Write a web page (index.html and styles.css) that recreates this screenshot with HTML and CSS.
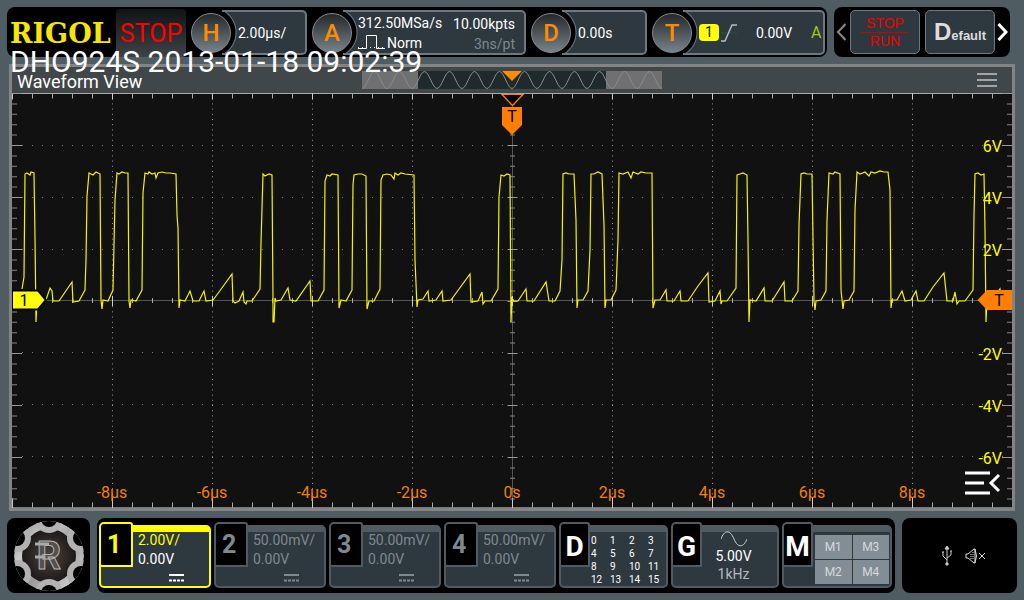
FILE: index.html
```html
<!DOCTYPE html>
<html lang="en">
<head>
    <meta charset="UTF-8">
    <meta name="viewport" content="width=device-width, initial-scale=1.0">
    <title>DHO924S</title>
    <link rel="stylesheet" href="styles.css">
</head>
<body>
    <header class="topbar">
        <div class="panel settings">
            <div class="brand">RIGOL</div>
            <div class="run-state">STOP</div>
            <button class="setting horizontal">
                <span class="knob">H</span>
                <span class="readout">2.00µs/</span>
            </button>
            <button class="setting acquire">
                <span class="knob">A</span>
                <span class="readout">
                    <span class="col">
                        <span>312.50MSa/s</span>
                        <span class="mode">
                            <svg width="27" height="16" viewBox="0 0 27 16"><path d="M0 13.500h8.500V.500h10v13H27" fill="none" stroke="#fff"/><path d="M0 12.500h27" stroke="#fff" stroke-dasharray="1 3"/></svg>
                            Norm
                        </span>
                    </span>
                    <span class="col right">
                        <span>10.00kpts</span>
                        <span class="dim">3ns/pt</span>
                    </span>
                </span>
            </button>
            <button class="setting delay">
                <span class="knob">D</span>
                <span class="readout">0.00s</span>
            </button>
            <button class="setting trigger">
                <span class="knob">T</span>
                <span class="readout">
                    <span class="source">1</span>
                    <svg width="16" height="18" viewBox="0 0 16 18"><path d="M0 9h16" stroke="#23504f"/><path d="M0 17h4L11 1h5" fill="none" stroke="#b4bcc0" stroke-width="1.500"/></svg>
                    <span class="level">0.00V</span>
                    <span class="sweep">A</span>
                </span>
            </button>
        </div>
        <div class="panel shortcuts">
            <button class="arrow prev" aria-label="Previous"><svg width="11" height="18" viewBox="0 0 11 18"><path d="M9.500 1L2 9l7.500 8"/></svg></button>
            <button class="key stoprun"><span>STOP</span><span>RUN</span></button>
            <button class="key default"><span class="big">D</span>efault</button>
            <button class="arrow next" aria-label="Next"><svg width="11" height="18" viewBox="0 0 11 18"><path d="M1.500 1L9 9l-7.500 8"/></svg></button>
        </div>
    </header>
    <div class="stamp">DHO924S 2013-01-18 09:02:39</div>

    <main class="wave-window">
        <div class="wave-head">
            <div class="wave-title">Waveform View</div>
            <svg class="overview" width="300" height="18" viewBox="0 0 300 18">
                <defs>
                    <pattern id="sine" width="25" height="18" patternUnits="userSpaceOnUse">
                        <path d="M0 17.500c4.500 0 8-17 12.500-17s8 17 12.500 17" fill="none" stroke="#858b8b"/>
                    </pattern>
                </defs>
                <rect width="300" height="18" fill="#707070"/>
                <rect x="56" width="188" height="18" fill="#1e2a2c"/>
                <rect width="300" height="18" fill="url(#sine)"/>
                <path d="M140 0h20l-10 10z" fill="#ff8c00"/>
            </svg>
            <button class="menu" aria-label="Menu"><svg width="20" height="14" viewBox="0 0 20 14"><path d="M0 1h20M0 7h20M0 13h20" stroke="#c4c4c4" stroke-width="1.500"/></svg></button>
        </div>
        <svg class="plot" viewBox="12 93 1000 415">
            <rect x="12" y="93" width="1000" height="415" fill="#111"/>

            <!-- grid dots -->
            <g stroke="#777" stroke-dasharray="1 9">
                <path d="M22 145.500H1012M22 197.500H1012M22 249.500H1012M22 352.500H1012M22 404.500H1012M22 456.500H1012"/>
            </g>
            <g stroke="#999" stroke-dasharray="1 4.200">
                <path d="M112.500 93V508M212.500 93V508M312.500 93V508M412.500 93V508M612.500 93V508M712.500 93V508M812.500 93V508M912.500 93V508"/>
            </g>

            <!-- axes and ticks -->
            <path d="M12 300.500H1012M512.500 93V508" stroke="#555"/>
            <path d="M12 93.500H1012" stroke="#aaa"/>
            <path d="M12 507.500H1012" stroke="#777"/>
            <g stroke="#aaa" stroke-dasharray="1 19">
                <path d="M12 96H1012M12 505H1012M12 300.500H1012" stroke-width="5"/>
            </g>
            <g stroke="#ccc" stroke-dasharray="1 99">
                <path d="M12 96H1012" stroke-width="7"/>
                <path d="M12 503H1012M12 301H1012" stroke-width="10"/>
            </g>
            <g stroke="#888" stroke-dasharray="1 9.400">
                <path d="M14.500 93V508M1009.500 93V508M512.500 93V508" stroke-width="5"/>
            </g>
            <g stroke="#999" stroke-dasharray="1 51">
                <path d="M17 93V508M1007 93V508M512.500 93V508" stroke-width="10"/>
            </g>

            <g class="volt">
                <text x="1002" y="152">6V</text>
                <text x="1002" y="204">4V</text>
                <text x="1002" y="256">2V</text>
                <text x="1002" y="360">-2V</text>
                <text x="1002" y="412">-4V</text>
                <text x="1002" y="464">-6V</text>
            </g>
            <g class="time">
                <text x="112" y="498">-8µs</text>
                <text x="212" y="498">-6µs</text>
                <text x="312" y="498">-4µs</text>
                <text x="412" y="498">-2µs</text>
                <text x="512" y="498">0s</text>
                <text x="612" y="498">2µs</text>
                <text x="712" y="498">4µs</text>
                <text x="812" y="498">6µs</text>
                <text x="912" y="498">8µs</text>
            </g>

            <!-- channel 1 trace -->
            <path class="trace" d="M22 289L24 277L25 174L27 173L30 175L31 172L34 173L35 238L36 322L37 300L46 300L50 288L52 291L53 301L59 301L72 282L73 302L79 301L85 290L86 260L87 196L89 173L91 174L93 175L96 172L100 174L101 300L102 309L103 300L108 301L113 290L115 200L117 173L119 174L122 172L125 173L128 173L129 301L130 308L131 300L136 301L142 290L143 193L145 173L148 174L149 172L152 174L155 173L156 178L158 173L162 172L166 173L170 173L176 174L177 215L178 228L179 308L180 300L185 301L190 291L193 301L199 301L204 291L206 301L213 300L219 292L232 274L233 301L235 303L239 301L243 292L244 302L246 304L247 301L252 301L260 289L261 243L263 174L265 176L269 174L272 175L273 301V322H274L275 298L276 301L281 300L288 288L290 300L296 301L310 281L311 301L318 301L324 290L325 181L327 175L330 176L332 174L338 175L339 308L341 300L346 301L352 290L353 185L354 175L358 174L362 174L366 176L367 309L369 301L374 301L380 289L381 180L383 175L387 174L391 175L394 179L395 173L398 175L401 173L405 174L414 175L415 260L417 307L418 300L423 299L428 291L429 301L436 300L442 291L443 301L451 300L470 274L471 302L478 301L482 292L483 304L485 301L491 301L498 289L499 197L501 175L504 176L507 174L510 175L511 322L512 298L514 301L518 301L526 289L527 301L534 301L546 282L549 301L555 301L560 291L562 260L563 174L566 173L569 174L574 174L576 220L577 308L578 300L583 300L588 291L590 250L591 174L594 174L598 172L602 174L604 225L605 308L606 300L611 300L616 290L618 240L619 173L623 174L628 172L631 178L633 172L638 174L641 172L646 173L652 173L653 308L655 300L660 300L666 290L667 301L674 301L680 291L681 301L688 301L698 286L708 273L709 302L715 301L720 291L721 304L722 301L727 301L736 288L737 175L740 174L743 173L747 175L748 240L749 322L750 300L756 301L764 288L765 301L772 301L784 282L785 301L792 301L798 291L799 225L801 174L804 173L807 174L812 174L814 301L815 310L816 301L821 300L826 291L827 220L829 173L833 174L835 172L840 174L841 290L843 309L844 301L849 300L854 291L855 210L857 172L860 174L865 172L869 176L871 172L875 173L880 171L884 172L888 172L890 190L891 308L892 300L897 300L902 291L905 301L911 300L916 291L918 301L924 301L933 287L944 273L947 301L953 301L955 292L957 304L959 301L965 301L973 290L974 215L975 174L978 173L981 175L984 174L985 230L986 322L987 300L992 300L1000 289L1001 301"/>

            <!-- markers -->
            <path d="M12 290.500H38L46 300L38 309.500H12z" fill="#ff0" stroke="#000" stroke-width="2"/>
            <text class="tag" x="24" y="306">1</text>
            <path d="M977.500 300L987 290H1012V310H987z" fill="#ff8000"/>
            <text class="tag" x="999" y="306">T</text>
            <path d="M502 94.500H523L512.500 105.500z" fill="#000" stroke="#ff8c00" stroke-width="1.200"/>
            <path d="M502 107H522V125L512 135L502 125z" fill="#ff8000"/>
            <text class="tag" x="512" y="122">T</text>

            <path d="M965 473H990M965 483H984M965 493H990M999 475L991 483L999 491" fill="none" stroke="#fff" stroke-width="3"/>
        </svg>
    </main>

    <footer class="bottombar">
        <button class="panel gear" aria-label="Start">
            <svg width="72" height="72" viewBox="-36 -36 72 72">
                <defs>
                    <linearGradient id="silver" x1="0" y1="0" x2="1" y2="1">
                        <stop offset="0" stop-color="#8c8c8c"/>
                        <stop offset=".3" stop-color="#c9c9c9"/>
                        <stop offset=".55" stop-color="#9a9a9a"/>
                        <stop offset="1" stop-color="#e0e0e0"/>
                    </linearGradient>
                    <radialGradient id="core">
                        <stop offset="0" stop-color="#4b4340"/>
                        <stop offset="1" stop-color="#1d1918"/>
                    </radialGradient>
                    <clipPath id="disc"><circle r="35"/></clipPath>
                </defs>
                <g clip-path="url(#disc)">
                    <circle r="35" fill="url(#silver)"/>
                    <circle r="27" fill="url(#core)"/>
                    <g fill="#b2b2b2">
                        <circle cx="0" cy="-37" r="14"/><circle cx="32" cy="-18" r="14"/><circle cx="32" cy="18" r="14"/>
                        <circle cx="0" cy="37" r="14"/><circle cx="-32" cy="18" r="14"/><circle cx="-32" cy="-18" r="14"/>
                    </g>
                    <g fill="#000">
                        <circle cx="0" cy="-37" r="8"/><circle cx="32" cy="-18" r="8"/><circle cx="32" cy="18" r="8"/>
                        <circle cx="0" cy="37" r="8"/><circle cx="-32" cy="18" r="8"/><circle cx="-32" cy="-18" r="8"/>
                    </g>
                </g>
                <text class="gear-letter" x="0" y="13">R</text>
                <path d="M-14-12H0M-14 1H-4" stroke="#aaa" stroke-width="3"/>
            </svg>
        </button>
        <div class="panel channels">
            <button class="channel active">
                <span class="tab">1</span>
                <span class="values"><span class="scale">2.00V/</span><span>0.00V</span>
                    <svg class="coupling" width="15" height="8" viewBox="0 0 15 8"><path d="M0 1h15" stroke-width="2"/><path d="M0 6.500h15" stroke-width="2" stroke-dasharray="3 1"/></svg>
                </span>
            </button>
            <button class="channel">
                <span class="tab">2</span>
                <span class="values"><span>50.00mV/</span><span>0.00V</span>
                    <svg class="coupling" width="15" height="8" viewBox="0 0 15 8"><path d="M0 1h15" stroke-width="2"/><path d="M0 6.500h15" stroke-width="2" stroke-dasharray="3 1"/></svg>
                </span>
            </button>
            <button class="channel">
                <span class="tab">3</span>
                <span class="values"><span>50.00mV/</span><span>0.00V</span>
                    <svg class="coupling" width="15" height="8" viewBox="0 0 15 8"><path d="M0 1h15" stroke-width="2"/><path d="M0 6.500h15" stroke-width="2" stroke-dasharray="3 1"/></svg>
                </span>
            </button>
            <button class="channel">
                <span class="tab">4</span>
                <span class="values"><span>50.00mV/</span><span>0.00V</span>
                    <svg class="coupling" width="15" height="8" viewBox="0 0 15 8"><path d="M0 1h15" stroke-width="2"/><path d="M0 6.500h15" stroke-width="2" stroke-dasharray="3 1"/></svg>
                </span>
            </button>
            <button class="channel tool">
                <span class="tab narrow">D</span>
                <span class="digital">
                    <span>0</span><span>1</span><span>2</span><span>3</span>
                    <span>4</span><span>5</span><span>6</span><span>7</span>
                    <span>8</span><span>9</span><span>10</span><span>11</span>
                    <span>12</span><span>13</span><span>14</span><span>15</span>
                </span>
            </button>
            <button class="channel tool">
                <span class="tab narrow">G</span>
                <span class="generator">
                    <svg width="26" height="16" viewBox="0 0 26 16"><path d="M0 8C3-1 9-2 13 8s10 8 13 0" fill="none" stroke="#ccd0d2"/></svg>
                    <span>5.00V</span>
                    <span class="freq">1kHz</span>
                </span>
            </button>
            <button class="channel tool">
                <span class="tab narrow">M</span>
                <span class="math"><span>M1</span><span>M3</span><span>M2</span><span>M4</span></span>
            </button>
        </div>
        <div class="panel status">
            <svg width="10" height="20" viewBox="0 0 10 20" fill="none" stroke="#ccc"><path d="M5 2v15M1 6v4l4 4M9 5v4l-4 3"/><path d="M5 0l2 3H3zM4 17h2v2H4zM0 6h2M8 5h2" fill="#ccc"/></svg>
            <svg width="20" height="18" viewBox="0 0 20 18" fill="none" stroke="#ddd"><path d="M1 7v4h2l6 5h1V2H9L3 7z"/><path d="M10 2q3 7 0 14M14 6l6 6M20 6l-6 6"/><path d="M8 5v8M6 7v5" stroke-dasharray="1 1"/></svg>
        </div>
    </footer>
</body>
</html>
```
FILE: styles.css
```css
*{
    box-sizing: border-box;
}
body{
    margin: 0;
    background-color: #4f5c61;
    color: #fff;
    font-family: Roboto, "Liberation Sans", sans-serif;
    font-size: 14px;
}
button{
    margin: 0;
    padding: 0;
    border: 0;
    background: none;
    color: inherit;
    font: inherit;
    text-align: left;
    cursor: pointer;
}
svg{
    display: block;
    flex: none;
}
.panel{
    background-color: #000;
    border-radius: 8px;
}

/* top bar */
.topbar{
    display: flex;
    gap: 7px;
    height: 64px;
    padding: 7px 14px 7px 7px;
}
.settings{
    flex: 1;
    display: flex;
    gap: 5px;
    padding: 3px 2px 2px 3px;
}
.brand{
    width: 101px;
    color: #f5e800;
    font-family: "DejaVu Serif", serif;
    font-weight: bold;
    font-size: 27px;
    line-height: 48px;
}
.run-state{
    width: 70px;
    margin: -1px 0 -2px;
    border-radius: 4px;
    background: linear-gradient(#111416, #3c4346);
    color: #f00;
    font-size: 25px;
    line-height: 49px;
    text-align: center;
}
.setting{
    display: flex;
    align-items: center;
    height: 45px;
}
.horizontal, .delay{
    flex: 116;
}
.acquire{
    flex: 214;
}
.trigger{
    flex: 173;
}
.knob{
    flex: none;
    width: 40px;
    height: 40px;
    margin-right: -9px;
    border: 1px solid #83898c;
    border-radius: 50%;
    background: linear-gradient(#24282a, #77828a);
    color: #ff8c00;
    font-size: 24px;
    font-weight: 500;
    line-height: 39px;
    text-align: center;
    position: relative;
}
.readout{
    flex: 1;
    display: flex;
    align-items: center;
    height: 45px;
    padding-left: 16px;
    border: 2px solid #6c7981;
    border-left: 0;
    border-radius: 0 5px 5px 0;
    background: radial-gradient(circle at -11px 50%, #000 24px, #6c7981 25px, #2e383f 26px);
    white-space: nowrap;
}
.acquire .readout{
    justify-content: space-between;
    padding: 0 9px 0 15px;
}
.col{
    display: flex;
    flex-direction: column;
    gap: 4px;
    line-height: 16px;
}
.right{
    text-align: right;
    padding-top: 3px;
}
.mode{
    display: flex;
    gap: 2px;
}
.dim{
    color: #7e8890;
}
.source{
    width: 20px;
    margin: 0 2px 0 0;
    border-radius: 4px;
    background-color: #ff0;
    color: #000;
    line-height: 17px;
    text-align: center;
}
.level{
    flex: 1;
    text-align: center;
}
.sweep{
    width: 12px;
    color: #9c1;
    font-size: 16px;
}
.shortcuts{
    width: 176px;
    display: flex;
    align-items: center;
    padding: 0 2px;
}
.arrow path{
    fill: none;
    stroke: #fff;
    stroke-width: 3;
}
.prev path{
    stroke: #888;
    stroke-width: 2;
}
.key{
    width: 70px;
    height: 44px;
    margin: 0 2px 0 3px;
    border: 1px solid #6c7981;
    border-radius: 5px;
    background-color: #2e383f;
    text-align: center;
}
.stoprun{
    color: #e00;
    font-family: "Liberation Sans", sans-serif;
}
.stoprun span{
    display: block;
    width: 48px;
    margin: 0 auto;
    line-height: 17px;
}
.stoprun span:first-child{
    border-bottom: 1px solid #c00;
}
.default{
    color: #ddd;
    font-family: "Liberation Sans", sans-serif;
    font-size: 13px;
    font-weight: bold;
}
.big{
    font-size: 24px;
}
.stamp{
    position: absolute;
    top: 44px;
    left: 10px;
    font-size: 30px;
    line-height: 36px;
    white-space: nowrap;
}

/* waveform window */
.wave-window{
    margin: 0 9px 7px;
    border: 3px solid #848484;
}
.wave-head{
    display: grid;
    grid-template-columns: 1fr auto 1fr;
    align-items: center;
    height: 26px;
    padding: 0 15px 0 5px;
    background-color: #414648;
}
.wave-title{
    padding-top: 2px;
    font-size: 18px;
}
.overview{
    margin-left: 10px;
}
.menu{
    justify-self: end;
}
.plot{
    width: 100%;
    height: auto;
}
.plot text{
    font-size: 16px;
    text-anchor: middle;
}
.plot .volt text{
    fill: #ff0;
    text-anchor: end;
}
.plot .time text{
    fill: #f08000;
}
.plot .tag{
    fill: #000;
}
.trace{
    fill: none;
    stroke: #f4f400;
    stroke-width: 1.2;
}

/* bottom bar */
.bottombar{
    display: flex;
    gap: 7px;
    height: 75px;
    margin: 0 7px 7px;
}
.gear{
    width: 83px;
    display: flex;
    align-items: center;
    justify-content: center;
}
.gear-letter{
    fill: #55504e;
    stroke: #b4b4b4;
    font-size: 38px;
    font-weight: bold;
    text-anchor: middle;
}
.channels{
    flex: 1;
    display: grid;
    grid-template-columns: repeat(4, 112fr) 109fr 108fr 110fr;
    gap: 3px;
    padding: 4px 3px 5px 2px;
}
.channel{
    --line: #4f5b60;
    position: relative;
    display: flex;
    align-items: flex-start;
    color: #7e8890;
}
.channel.active{
    --line: #ff0;
    color: #fff;
}
.tool{
    color: #fff;
}
/* card behind the raised tab */
.channel::before{
    content: "";
    position: absolute;
    inset: 3px 0 0;
    border: 2px solid var(--line);
    border-top-width: 7px;
    border-radius: 5px;
    background-color: #2e383f;
}
.tab{
    position: relative;
    flex: none;
    width: 34px;
    height: 45px;
    border: 2px solid var(--line);
    border-radius: 5px 3px 0 3px;
    background-color: #000;
    font-size: 25px;
    font-weight: bold;
    line-height: 41px;
    padding-left: 6px;
}
.narrow{
    width: 31px;
    padding-left: 0;
    font-size: 28px;
    line-height: 45px;
    text-align: center;
}
.active .tab, .scale{
    color: #ff0;
}
.values{
    position: relative;
    flex: 1;
    display: flex;
    flex-direction: column;
    padding: 9px 0 0 5px;
    line-height: 19px;
}
.coupling{
    margin: 5px 0 0 31px;
    stroke: currentColor;
}
.digital{
    position: relative;
    flex: 1;
    display: grid;
    grid-template-columns: repeat(4, 19px);
    padding-top: 12px;
    font-size: 10px;
    line-height: 13px;
}
.digital span{
    padding-left: 1px;
}
.generator{
    position: relative;
    flex: 1;
    display: flex;
    flex-direction: column;
    align-items: center;
    padding: 9px 14px 0 0;
    line-height: 18px;
}
.freq{
    color: #b4babd;
}
.math{
    position: relative;
    flex: 1;
    display: grid;
    grid-template-columns: 1fr 1fr;
    gap: 1px;
    margin: 13px 3px 0 2px;
}
.math span{
    background-color: #838d96;
    color: #d5d9dc;
    font-size: 12px;
    line-height: 24px;
    text-align: center;
}
.status{
    width: 115px;
    display: flex;
    align-items: center;
    justify-content: center;
    gap: 13px;
    padding-left: 7px;
}
```
